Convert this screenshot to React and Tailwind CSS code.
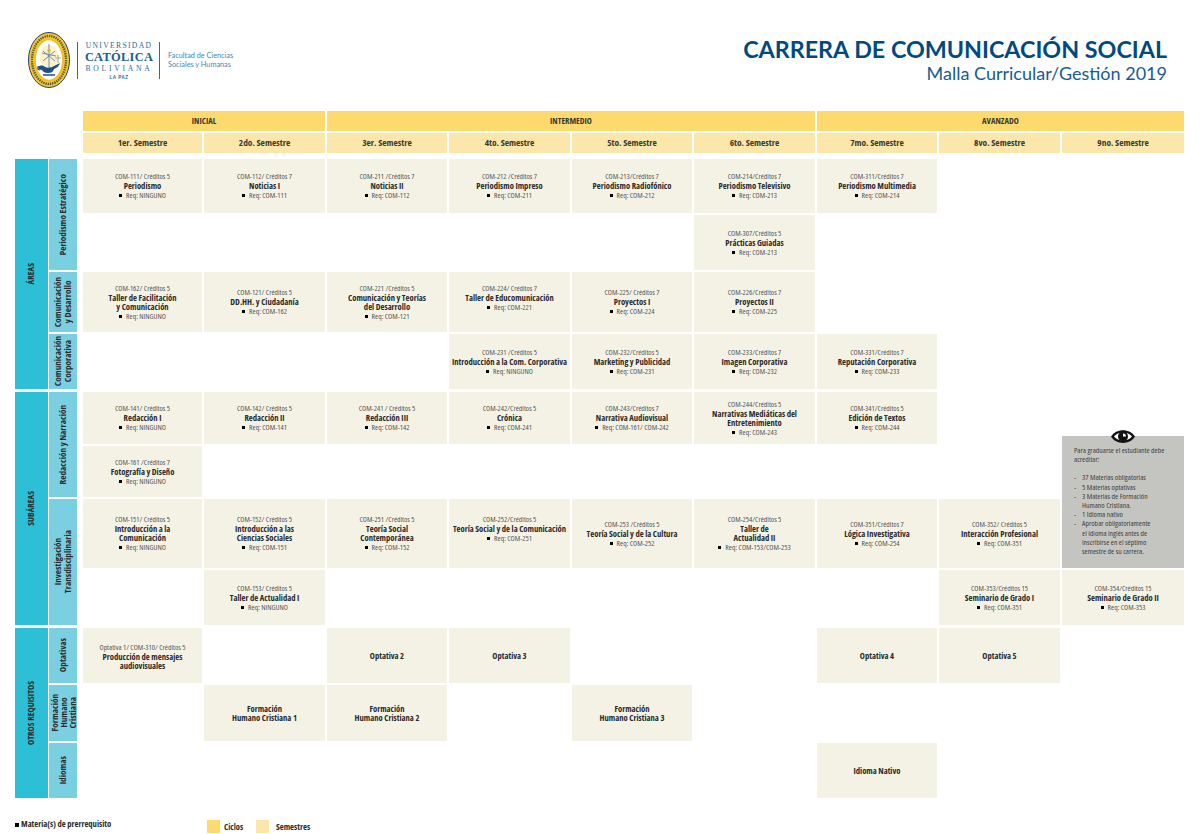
const colStart = {
  1: 'col-start-3',
  2: 'col-start-4',
  3: 'col-start-5',
  4: 'col-start-6',
  5: 'col-start-7',
  6: 'col-start-8',
  7: 'col-start-9',
  8: 'col-start-10',
  9: 'col-start-11',
}

const rowStart = {
  1: 'row-start-3',
  2: 'row-start-4',
  3: 'row-start-5',
  4: 'row-start-6',
  5: 'row-start-7',
  6: 'row-start-8',
  7: 'row-start-9',
  8: 'row-start-10',
  9: 'row-start-11',
  10: 'row-start-12',
  11: 'row-start-13',
}

const semesters = ['1er. Semestre', '2do. Semestre', '3er. Semestre', '4to. Semestre', '5to. Semestre', '6to. Semestre', '7mo. Semestre', '8vo. Semestre', '9no. Semestre']

const courses = [
  { col: 1, row: 1, code: 'COM-111/ Créditos 5', name: ['Periodismo'], req: 'NINGUNO' },
  { col: 2, row: 1, code: 'COM-112/ Créditos 7', name: ['Noticias I'], req: 'COM-111' },
  { col: 3, row: 1, code: 'COM-211 /Créditos 7', name: ['Noticias II'], req: 'COM-112' },
  { col: 4, row: 1, code: 'COM-212 /Créditos 7', name: ['Periodismo Impreso'], req: 'COM-211' },
  { col: 5, row: 1, code: 'COM-213/Créditos 7', name: ['Periodismo Radiofónico'], req: 'COM-212' },
  { col: 6, row: 1, code: 'COM-214/Créditos 7', name: ['Periodismo Televisivo'], req: 'COM-213' },
  { col: 7, row: 1, code: 'COM-311/Créditos 7', name: ['Periodismo Multimedia'], req: 'COM-214' },
  { col: 6, row: 2, code: 'COM-307/Créditos 5', name: ['Prácticas Guiadas'], req: 'COM-213' },
  { col: 1, row: 3, code: 'COM-162/ Créditos 5', name: ['Taller de Facilitación', 'y Comunicación'], req: 'NINGUNO' },
  { col: 2, row: 3, code: 'COM-121/ Créditos 5', name: ['DD.HH. y Ciudadanía'], req: 'COM-162' },
  { col: 3, row: 3, code: 'COM-221 /Créditos 5', name: ['Comunicación y Teorías', 'del Desarrollo'], req: 'COM-121' },
  { col: 4, row: 3, code: 'COM-224/ Créditos 7', name: ['Taller de Educomunicación'], req: 'COM-221', up: true },
  { col: 5, row: 3, code: 'COM-225/ Créditos 7', name: ['Proyectos I'], req: 'COM-224' },
  { col: 6, row: 3, code: 'COM-226/Créditos 7', name: ['Proyectos II'], req: 'COM-225' },
  { col: 4, row: 4, code: 'COM-231 /Créditos 5', name: ['Introducción a la Com. Corporativa'], req: 'NINGUNO' },
  { col: 5, row: 4, code: 'COM-232/Créditos 5', name: ['Marketing y Publicidad'], req: 'COM-231' },
  { col: 6, row: 4, code: 'COM-233/Créditos 7', name: ['Imagen Corporativa'], req: 'COM-232' },
  { col: 7, row: 4, code: 'COM-331/Créditos 7', name: ['Reputación Corporativa'], req: 'COM-233' },
  { col: 1, row: 5, code: 'COM-141/ Créditos 5', name: ['Redacción I'], req: 'NINGUNO' },
  { col: 2, row: 5, code: 'COM-142/ Créditos 5', name: ['Redacción II'], req: 'COM-141' },
  { col: 3, row: 5, code: 'COM-241 / Créditos 5', name: ['Redacción III'], req: 'COM-142' },
  { col: 4, row: 5, code: 'COM-242/Créditos 5', name: ['Crónica'], req: 'COM-241' },
  { col: 5, row: 5, code: 'COM-243/Créditos 7', name: ['Narrativa Audiovisual'], req: 'COM-161/ COM-242' },
  { col: 6, row: 5, code: 'COM-244/Créditos 5', name: ['Narrativas Mediáticas del', 'Entretenimiento'], req: 'COM-243' },
  { col: 7, row: 5, code: 'COM-341/Créditos 5', name: ['Edición de Textos'], req: 'COM-244' },
  { col: 1, row: 6, code: 'COM-161 /Créditos 7', name: ['Fotografía y Diseño'], req: 'NINGUNO' },
  { col: 1, row: 7, code: 'COM-151/ Créditos 5', name: ['Introducción a la', 'Comunicación'], req: 'NINGUNO' },
  { col: 2, row: 7, code: 'COM-152/ Créditos 5', name: ['Introducción a las', 'Ciencias Sociales'], req: 'COM-151' },
  { col: 3, row: 7, code: 'COM-251 /Créditos 5', name: ['Teoría Social', 'Contemporánea'], req: 'COM-152' },
  { col: 4, row: 7, code: 'COM-252/Créditos 5', name: ['Teoría Social y de la Comunicación'], req: 'COM-251', up: true },
  { col: 5, row: 7, code: 'COM-253 /Créditos 5', name: ['Teoría Social y de la Cultura'], req: 'COM-252' },
  { col: 6, row: 7, code: 'COM-254/Créditos 5', name: ['Taller de', 'Actualidad II'], req: 'COM-153/COM-253' },
  { col: 7, row: 7, code: 'COM-351/Créditos 7', name: ['Lógica Investigativa'], req: 'COM-254' },
  { col: 8, row: 7, code: 'COM-352/ Créditos 5', name: ['Interacción Profesional'], req: 'COM-351' },
  { col: 2, row: 8, code: 'COM-153/ Créditos 5', name: ['Taller de Actualidad I'], req: 'NINGUNO' },
  { col: 8, row: 8, code: 'COM-353/Créditos 15', name: ['Seminario de Grado I'], req: 'COM-351' },
  { col: 9, row: 8, code: 'COM-354/Créditos 15', name: ['Seminario de Grado II'], req: 'COM-353' },
  { col: 1, row: 9, code: 'Optativa 1/ COM-310/ Créditos 5', name: ['Producción de mensajes', 'audiovisuales'] },
  { col: 3, row: 9, name: ['Optativa 2'] },
  { col: 4, row: 9, name: ['Optativa 3'] },
  { col: 7, row: 9, name: ['Optativa 4'] },
  { col: 8, row: 9, name: ['Optativa 5'] },
  { col: 2, row: 10, name: ['Formación', 'Humano Cristiana 1'] },
  { col: 3, row: 10, name: ['Formación', 'Humano Cristiana 2'] },
  { col: 5, row: 10, name: ['Formación', 'Humano Cristiana 3'] },
  { col: 7, row: 11, name: ['Idioma Nativo'] },
]

const requirements = [
  '37 Materias obligatorias',
  '5 Materias optativas',
  ['3 Materias de Formación', 'Humano Cristiana.'],
  '1 Idioma nativo',
  ['Aprobar obligatoriamente', 'el idioma inglés antes de', 'inscribirse en el séptimo', 'semestre de su carrera.'],
]

function Seal() {
  return (
    <svg width="42" height="56" viewBox="0 0 42 56">
      <ellipse cx="21" cy="28" rx="20.5" ry="27.5" fill="#f6c92f" stroke="#24406f" strokeWidth="1" />
      <ellipse cx="21" cy="28" rx="17" ry="24" fill="none" stroke="#5b5a3a" strokeWidth="2.4" strokeDasharray="1.4 0.9" />
      <ellipse cx="21" cy="28" rx="14" ry="20.5" fill="#fff" stroke="#f0bd1f" strokeWidth="1.6" />
      <ellipse cx="21" cy="25" rx="9.5" ry="12" fill="#fdf3c6" />
      <path d="M21 12v24M14 21l14 3M15 29l12-10M27 29l-12-10" stroke="#6d8fb5" strokeWidth="1" fill="none" />
      <path d="M19.5 17h3v3h-3z" fill="#e7b51e" />
      <path d="M10 35c2-2 5-2 7 0 2 1 6 1 9-1l6-3c-1 3-3 5-6 6-1 3-3 4-6 4s-5-1-6-3c-2 0-4-1-4-3z" fill="#1c4f8c" />
      <path d="M12 35c-3-2-3 3 0 3" stroke="#1c4f8c" strokeWidth="1.1" fill="none" />
      <path d="M15 43h12" stroke="#1c4f8c" strokeWidth="1.5" />
      <path d="M30 23v8M27 26h6" stroke="#a5a488" strokeWidth="0.9" />
    </svg>
  )
}

function Eye() {
  return (
    <svg width="24" height="15" viewBox="0 0 24 15">
      <path d="M0 7.5C5-1 19-1 24 7.5 19 16 5 16 0 7.5z" fill="#111" />
      <path d="M3 7.5C7 2 17 2 21 7.5 17 13 7 13 3 7.5z" fill="#fff" />
      <circle cx="12" cy="7.5" r="5" fill="#111" />
      <path d="M12 4.5a3 3 0 0 1 3 3h-3z" fill="#fff" />
    </svg>
  )
}

function Course({ course }) {
  const { col, row, code, name, req, up } = course
  return (
    <div
      className={`${colStart[col]} ${rowStart[row]} ${row === 4 || row === 8 ? 'mb-px' : ''} ${up ? 'pb-[9px]' : ''} ${req ? '' : 'pt-[2px]'} flex flex-col items-center justify-center bg-[#f4f2e5] text-center`}
    >
      {code ? <p className="text-[7.6px] leading-[9px] whitespace-nowrap text-[#555]">{code}</p> : null}
      <p className={`${code ? 'mt-px' : ''} text-[8.6px] leading-[9px] font-bold whitespace-nowrap text-[#2b2b2b]`}>
        {name.map((line) => (
          <span key={line} className="block">{line}</span>
        ))}
      </p>
      {req ? (
        <p className="flex items-center gap-[4px] text-[7.6px] leading-[9px] whitespace-nowrap text-[#555]">
          <span className="h-[3px] w-[3px] bg-black" />
          Req: {req}
        </p>
      ) : null}
    </div>
  )
}

function Side({ className, children }) {
  return (
    <div className={`flex items-center justify-center text-center font-bold text-[#2b2b2b] ${className}`}>
      <span className="rotate-180 whitespace-nowrap [writing-mode:vertical-rl]">{children}</span>
    </div>
  )
}

export default function App() {
  return (
    <div className="h-[834px] w-[1201px] overflow-hidden bg-white px-[15px] font-['Open_Sans',sans-serif] font-stretch-condensed">
      <header className="flex h-[111px] items-start justify-between">
        <div className="ml-[13px] mt-[32px] flex items-center">
          <Seal />
          <div className="ml-[7px] h-[37px] w-px bg-[#2b6c9f]" />
          <div className="ml-[8px] flex w-[66px] flex-col items-center pt-[2px] font-['Liberation_Serif',serif] font-stretch-normal text-[#2b6c9f]">
            <span className="text-[7.6px] leading-[10px] tracking-[1.35px] whitespace-nowrap">UNIVERSIDAD</span>
            <span className="text-[12.4px] leading-[12px] font-bold tracking-[0.3px] whitespace-nowrap text-[#1d5d95]">CATÓLICA</span>
            <span className="text-[7.6px] leading-[11px] tracking-[2.75px] whitespace-nowrap">BOLIVIANA</span>
            <span className="font-['Liberation_Sans',sans-serif] text-[4.6px] leading-[8px] font-bold tracking-[0.5px] whitespace-nowrap">LA PAZ</span>
          </div>
          <div className="ml-[7px] h-[37px] w-px bg-[#2b6c9f]" />
          <p className="ml-[8px] font-['Lato',sans-serif] font-stretch-normal text-[7.3px] leading-[9.5px] text-[#3f86b5]">
            Facultad de Ciencias
            <br />
            Sociales y Humanas
          </p>
        </div>
        <div className="mt-[36px] pr-[19px] text-right font-['Lato',sans-serif] font-stretch-normal">
          <h1 className="text-[23.3px] leading-[27px] font-bold whitespace-nowrap text-[#004a80]">CARRERA DE COMUNICACIÓN SOCIAL</h1>
          <p className="text-[18px] leading-[20px] whitespace-nowrap text-[#175c92]">Malla Curricular/Gestión 2019</p>
        </div>
      </header>

      <div className="grid grid-cols-[32px_32px_119px_121px_120px_121px_120px_121px_120px_121px_122px] grid-rows-[20px_24px_54px_55px_60px_56px_52px_51px_69px_56px_55px_56px_55px] gap-[2px]">
        <div className="col-span-2 col-start-3 row-start-1 flex items-center justify-center bg-[#fdd96e] text-[8.6px] font-bold text-[#3a3a30]">INICIAL</div>
        <div className="col-span-4 col-start-5 row-start-1 flex items-center justify-center bg-[#fdd96e] text-[8.6px] font-bold text-[#3a3a30]">INTERMEDIO</div>
        <div className="col-span-3 col-start-9 row-start-1 flex items-center justify-center bg-[#fdd96e] text-[8.6px] font-bold text-[#3a3a30]">AVANZADO</div>
        {semesters.map((semester, i) => (
          <div key={semester} className={`${colStart[i + 1]} row-start-2 mb-[4px] flex items-center justify-center bg-[#fde6a9] text-[9.4px] font-bold text-[#3a3a30]`}>
            {semester}
          </div>
        ))}

        <Side className="col-start-1 row-span-4 row-start-3 mb-px -mr-px bg-[#2cbfd6] text-[8.8px]">ÁREAS</Side>
        <Side className="col-start-1 row-span-4 row-start-7 mb-px -mr-px bg-[#2cbfd6] text-[8.8px]">SUBÁREAS</Side>
        <Side className="col-start-1 row-span-3 row-start-11 -mr-px bg-[#2cbfd6] text-[8.8px]">OTROS REQUISITOS</Side>

        <Side className="col-start-2 row-span-2 row-start-3 mr-[4px] bg-[#7acfe0] text-[9.2px] leading-[10px]">Periodismo Estratégico</Side>
        <Side className="col-start-2 row-start-5 mr-[4px] bg-[#7acfe0] text-[9.2px] leading-[10px]">Comunicación<br />y Desarrollo</Side>
        <Side className="col-start-2 row-start-6 mr-[4px] mb-px bg-[#7acfe0] text-[9.2px] leading-[10px]">Comunicación<br />Corporativa</Side>
        <Side className="col-start-2 row-span-2 row-start-7 mr-[4px] bg-[#7acfe0] text-[9.2px] leading-[10px]">Redacción y Narración</Side>
        <Side className="col-start-2 row-span-2 row-start-9 mr-[4px] mb-px bg-[#7acfe0] text-[9.2px] leading-[10px]">Investigación<br />Transdisciplinaria</Side>
        <Side className="col-start-2 row-start-11 mr-[4px] bg-[#7acfe0] text-[9.2px] leading-[10px]">Optativas</Side>
        <Side className="col-start-2 row-start-12 mr-[4px] bg-[#7acfe0] text-[9.2px] leading-[9px]">Formación<br />Humano<br />Cristiana</Side>
        <Side className="col-start-2 row-start-13 mr-[4px] bg-[#7acfe0] text-[9.2px] leading-[10px]">Idiomas</Side>

        {courses.map((course) => (
          <Course key={`${course.col}-${course.row}`} course={course} />
        ))}

        <aside className="relative col-start-11 row-span-3 row-start-7 h-[132px] self-end bg-[#c4c5c0] pl-[12px] pt-[10px] text-[7.7px] leading-[9.2px] text-[#3f3f3f]">
          <div className="absolute -top-[7px] left-[49px]">
            <Eye />
          </div>
          <p>Para graduarse el estudiante debe<br />acreditar:</p>
          <ul className="mt-[9px]">
            {requirements.map((item) => {
              const lines = Array.isArray(item) ? item : [item]
              return (
                <li key={lines[0]} className="flex">
                  <span className="w-[8px] shrink-0">-</span>
                  <span>
                    {lines.map((line) => (
                      <span key={line} className="block">{line}</span>
                    ))}
                  </span>
                </li>
              )
            })}
          </ul>
        </aside>
      </div>

      <footer className="mt-[22px] flex items-start text-[8.6px] font-bold leading-[13px] text-[#2b2b2b]">
        <p className="flex w-[192px] items-center gap-[2px] -mt-[2px]">
          <span className="h-[4px] w-[4px] bg-black" />
          Materia(s) de prerrequisito
        </p>
        <span className="h-[13px] w-[13px] bg-[#fdd96e]" />
        <span className="ml-[4px] w-[32px] pt-[1px]">Ciclos</span>
        <span className="h-[13px] w-[13px] bg-[#fde6a9]" />
        <span className="ml-[7px] pt-[1px]">Semestres</span>
      </footer>
    </div>
  )
}
